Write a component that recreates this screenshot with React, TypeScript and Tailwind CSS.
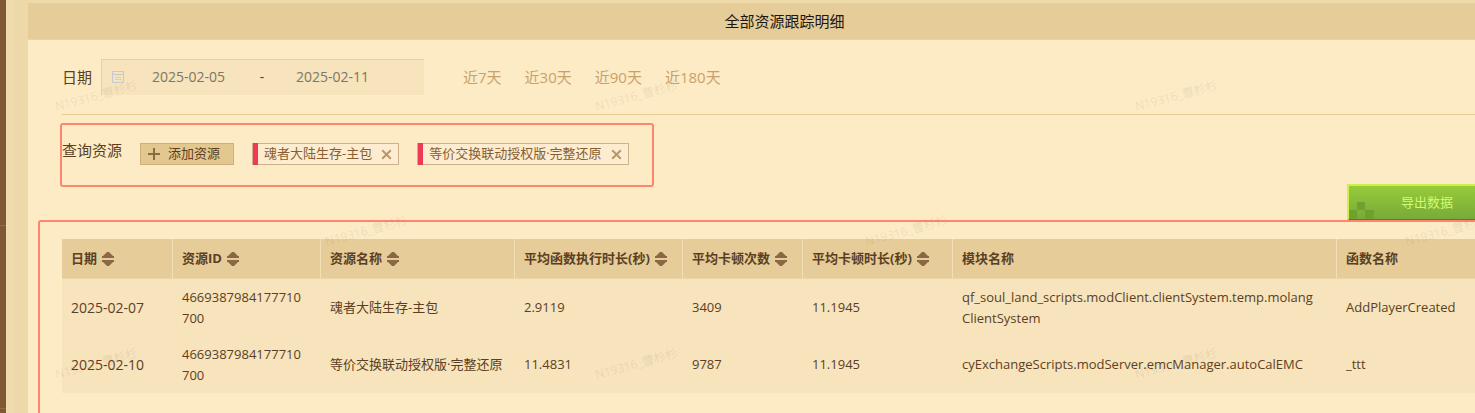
import React, { useState } from "react";

const FONT = "font-['Open_Sans','Noto_Sans_CJK_SC',sans-serif]";

const RANGES = ["近7天", "近30天", "近90天", "近180天"];

const COLUMNS = [
  { title: "日期", sortable: true, width: "w-[111px]", cell: "pr-2 text-sm" },
  { title: "资源ID", sortable: true, width: "w-[148px]", cell: "pr-4" },
  { title: "资源名称", sortable: true, width: "w-[194px]", cell: "pr-2" },
  { title: "平均函数执行时长(秒)", sortable: true, width: "w-[168px]", cell: "pr-2" },
  { title: "平均卡顿次数", sortable: true, width: "w-[120px]", cell: "pr-2" },
  { title: "平均卡顿时长(秒)", sortable: true, width: "w-[150px]", cell: "pr-2" },
  { title: "模块名称", sortable: false, width: "w-[384px]", cell: "pr-5" },
  { title: "函数名称", sortable: false, width: "", cell: "pr-2" },
];

const ROWS = [
  ["2025-02-07", "4669387984177710700", "魂者大陆生存-主包", "2.9119", "3409", "11.1945", "qf_soul_land_scripts.modClient.clientSystem.temp.molangClientSystem", "AddPlayerCreated"],
  ["2025-02-10", "4669387984177710700", "等价交换联动授权版·完整还原", "11.4831", "9787", "11.1945", "cyExchangeScripts.modServer.emcManager.autoCalEMC", "_ttt"],
];

const MARKS = [
  "left-[54px] top-[87px]",
  "left-[594px] top-[87px]",
  "left-[1134px] top-[87px]",
  "left-[324px] top-[222px]",
  "left-[864px] top-[222px]",
  "left-[1404px] top-[222px]",
  "left-[54px] top-[355px]",
  "left-[594px] top-[355px]",
  "left-[1134px] top-[355px]",
];

function SortIcon() {
  return (
    <svg width="12" height="14" viewBox="0 0 12 14" fill="#8b6845" aria-hidden="true">
      <path d="M5 0h2l4 4h1v2H0V4h1z" />
      <path d="M0 8h12v2h-1l-4 4H5l-4-4H0z" />
    </svg>
  );
}

function CalendarIcon() {
  return (
    <svg width="12" height="12" viewBox="0 0 12 12" fill="none" stroke="#c6c8d0" aria-hidden="true">
      <path d="M0.5 0.5h11v11h-11zM0 3.5h12" />
      <path d="M3 6.5h6M3 8.5h6" strokeDasharray="1.5 0.7" />
    </svg>
  );
}

function Tag({ name, onClose }: { name: string; onClose: () => void }) {
  return (
    <span className="flex h-[22px] items-center border border-[#d0b088] bg-[#fdeccf] pr-[6px] text-[13px] text-[#875f33]">
      <span className="h-[22px] w-[5px] bg-[#ee3a55]" />
      <span className="ml-[6px]">{name}</span>
      <button type="button" aria-label={"移除" + name} onClick={onClose} className="ml-[9px] cursor-pointer">
        <svg width="11" height="11" viewBox="0 0 11 11" fill="none" stroke="#b8976a" strokeWidth="2" aria-hidden="true">
          <path d="M1.2 1.2l8.6 8.6M9.8 1.2l-8.6 8.6" />
        </svg>
      </button>
    </span>
  );
}

export default function App() {
  const [start, setStart] = useState("2025-02-05");
  const [end, setEnd] = useState("2025-02-11");
  const [tags, setTags] = useState(["魂者大陆生存-主包", "等价交换联动授权版·完整还原"]);

  return (
    <div className={"relative flex min-h-screen overflow-hidden bg-[#eed9a9] text-[#5c3f22] " + FONT}>
      <div className="flex w-[6px] shrink-0 flex-col bg-[#7f5933] pt-[225px]">
        <div className="h-px bg-[#936b42]" />
        <div className="mt-[182px] h-px bg-[#936b42]" />
      </div>
      <div className="w-[8px] shrink-0 bg-[#efdbad]" />
      <div className="w-[14px] shrink-0 bg-[#ecd8a9]" />

      <main className="relative -mr-[66px] mt-[3px] min-w-0 flex-1 bg-[#fdebc5]">
        <h1 className="flex h-[37px] items-center justify-center border-b border-[#ead3a3] bg-[#e5cc98] text-[15px] text-[#1d1710]">
          全部资源跟踪明细
        </h1>

        <div className="px-[34px]">
          <div className="flex h-[75px] items-center border-b border-[#e5cc92] text-[15px]">
            <label htmlFor="start">日期</label>
            <div className="ml-[9px] flex h-[37px] w-[324px] items-center border border-[#fbeccc] border-l-[#e6d09c] border-t-[#e6d09c] bg-[#f7e3bc] pl-[10px] text-sm text-[#7d7565]">
              <CalendarIcon />
              <input id="start" value={start} onChange={(e) => setStart(e.target.value)} className="ml-[18px] w-[106px] bg-transparent px-[10px] outline-none" />
              <span className="w-[28px] text-center text-[#5c3f22]">-</span>
              <input aria-label="结束日期" value={end} onChange={(e) => setEnd(e.target.value)} className="ml-[10px] w-[106px] bg-transparent px-[10px] outline-none" />
            </div>
            <div className="ml-[38px] flex gap-[23px] text-[#c9a16c]">
              {RANGES.map((r) => (
                <button key={r} type="button" className="cursor-pointer">{r}</button>
              ))}
            </div>
          </div>

          <div className="relative flex h-[69px] items-start pt-[25px]">
            <span className="text-[15px] leading-[20px]">查询资源</span>
            <div className="ml-[18px] flex gap-[18px] pt-[3px]">
              <button type="button" className="flex h-[22px] w-[94px] cursor-pointer items-center border border-[#cfb07c] bg-[#e2c78e] pl-[7px] text-[13px]">
                <svg width="12" height="12" viewBox="0 0 12 12" stroke="#8c6a48" strokeWidth="2" aria-hidden="true">
                  <path d="M6 0v12M0 6h12" />
                </svg>
                <span className="ml-[8px]">添加资源</span>
              </button>
              {tags.map((t) => (
                <Tag key={t} name={t} onClose={() => setTags(tags.filter((x) => x !== t))} />
              ))}
            </div>
            <div className="pointer-events-none absolute -left-[2px] top-[8px] h-[64px] w-[594px] rounded-[3px] border-2 border-[#ff8570]" />
          </div>

          <div className="flex justify-end">
            <button type="button" className="relative h-[37px] w-[160px] cursor-pointer border-2 border-b-[#5b7c22] border-l-[#cdf04c] border-r-[#cdf04c] border-t-[#cdf04c] bg-linear-to-b from-[#98cb38] to-[#78aa3a] text-[13px] text-[#d3fa6c]">
              导出数据
              <svg className="absolute bottom-0 left-0" width="25" height="17" viewBox="0 0 25 17" fill="#6ea22c" aria-hidden="true">
                <path d="M8 0h8v8H8zM0 8h8v9H0zM16 8h9v9h-9z" />
              </svg>
            </button>
          </div>

          <div className="relative pt-[18px]">
            <table className="w-full table-fixed border-separate border-spacing-0 text-left text-[13px]">
              <thead>
                <tr className="h-[40px] bg-[#e5cc98]">
                  {COLUMNS.map((c) => (
                    <th key={c.title} className={"border-b border-r border-[#f2dfb5] border-b-[#ecd6a6] px-[9px] py-0 font-bold " + c.width}>
                      <span className="flex items-center gap-[5px] whitespace-nowrap">
                        {c.title}
                        {c.sortable && (
                          <button type="button" aria-label={"排序" + c.title} className="cursor-pointer">
                            <SortIcon />
                          </button>
                        )}
                      </span>
                    </th>
                  ))}
                </tr>
              </thead>
              <tbody>
                {ROWS.map((row) => (
                  <tr key={row[0]} className="h-[57px] bg-[#f7e3bc]">
                    {row.map((cell, i) => (
                      <td key={i} className={"break-all py-0 pl-[9px] leading-[21px] " + COLUMNS[i].cell}>{cell}</td>
                    ))}
                  </tr>
                ))}
              </tbody>
            </table>
            <div className="pointer-events-none absolute -left-[24px] -right-[24px] -top-[1px] h-[230px] rounded-[3px] border-2 border-[#ff8570]" />
          </div>
        </div>
      </main>

      <div className="pointer-events-none absolute inset-0 select-none overflow-hidden" aria-hidden="true">
        {MARKS.map((pos) => (
          <span key={pos} className={"absolute -rotate-15 whitespace-nowrap text-xs leading-[18px] text-[#8a7a5a]/15 " + pos}>
            N19316_曹杉杉
          </span>
        ))}
      </div>
    </div>
  );
}
